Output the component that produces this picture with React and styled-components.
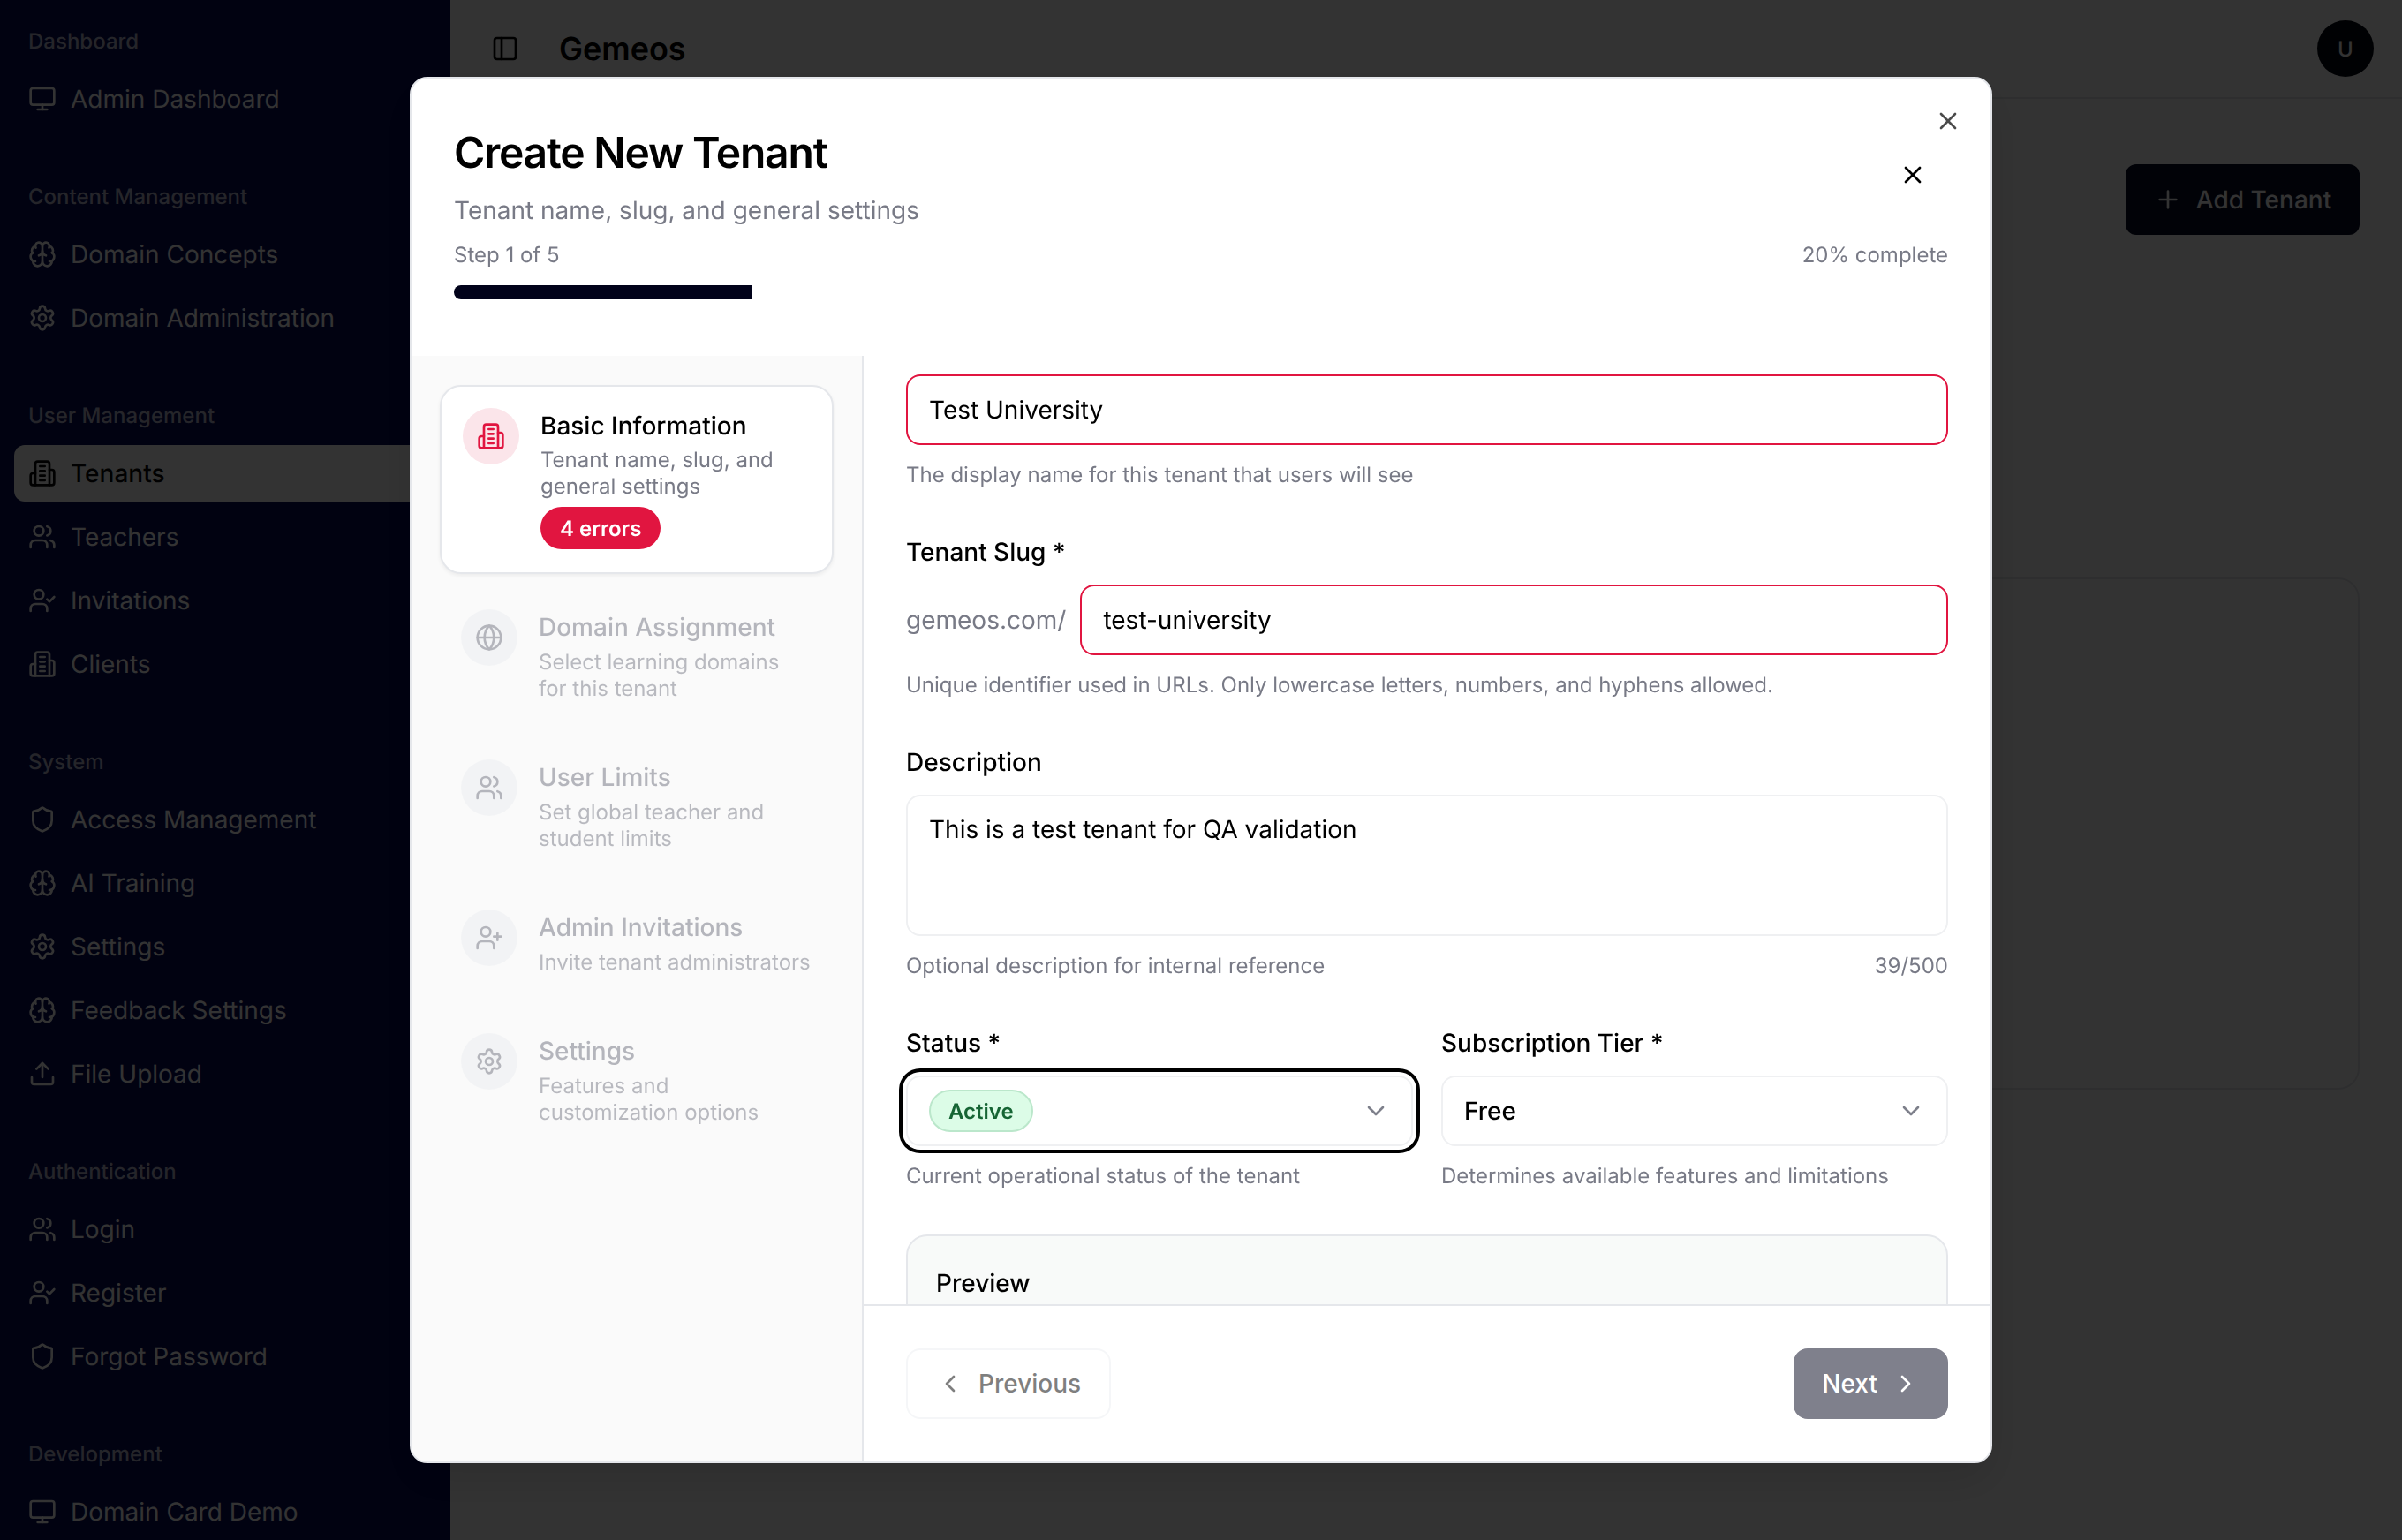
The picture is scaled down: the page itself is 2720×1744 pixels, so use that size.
import React from 'react';
import styled, { createGlobalStyle } from 'styled-components';
import { Monitor, Brain, Settings, Users, UserCheck, UserPlus, Shield, Upload, PanelLeft, Plus, X, Globe, ChevronDown, ChevronLeft, ChevronRight } from 'lucide-react';

const Global = createGlobalStyle`
  * { box-sizing: border-box; }
  html, body { margin: 0; padding: 0; height: 100%; overflow: hidden; background: #fff; }
  body { font-family: Inter, "Liberation Sans", sans-serif; color: #000; text-rendering: geometricPrecision; }
`;

const Page = styled.div`
  display: flex;
  width: 2720px;
  height: 1744px;
  overflow: hidden;
  background: #fff;
`;

const Side = styled.aside`
  width: 510px;
  flex: none;
  height: 1744px;
  overflow: hidden;
  background: #050a55;
  color: #fff;
  display: flex;
  flex-direction: column;
  gap: 16px;
`;

const Group = styled.section`
  padding: 16px;
  display: flex;
  flex-direction: column;
`;

const GroupLabel = styled.div`
  height: 64px;
  display: flex;
  align-items: center;
  padding: 0 16px 3px;
  font-size: 24px;
  font-weight: 500;
  color: rgba(255, 255, 255, 0.72);
`;

const Menu = styled.div`
  display: flex;
  flex-direction: column;
  gap: 8px;
`;

const Item = styled.div`
  height: 64px;
  display: flex;
  align-items: center;
  gap: 16px;
  padding: 0 16px;
  border-radius: 12px;
  font-size: 28px;
  font-weight: ${p => (p.$active ? 500 : 400)};
  background: ${p => (p.$active ? '#fff' : 'transparent')};
  color: ${p => (p.$active ? '#050505' : '#fff')};
  svg { width: 32px; height: 32px; flex: none; }
`;

const Main = styled.main`
  flex: 1;
  min-width: 0;
  display: flex;
  flex-direction: column;
`;

const TopBar = styled.header`
  height: 112px;
  flex: none;
  display: flex;
  align-items: center;
  gap: 45px;
  padding: 0 32px 0 46px;
  border-bottom: 2px solid #e5e7eb;
  svg { width: 32px; height: 32px; color: #000; }
`;

const Brand = styled.div`
  flex: 1;
  font-size: 36px;
  font-weight: 600;
  color: #000;
`;

const Avatar = styled.div`
  width: 64px;
  height: 64px;
  border-radius: 50%;
  background: #03060f;
  color: #fff;
  font-size: 24px;
  font-weight: 500;
  display: flex;
  align-items: center;
  justify-content: center;
`;

const Content = styled.div`
  flex: 1;
  padding: 74px 48px 0;
  display: flex;
  flex-direction: column;
  align-items: flex-end;
`;

const AddButton = styled.div`
  height: 80px;
  width: 265px;
  border-radius: 12px;
  background: #050a23;
  color: #fff;
  font-size: 28px;
  font-weight: 500;
  display: flex;
  align-items: center;
  justify-content: center;
  gap: 16px;
  svg { width: 32px; height: 32px; }
`;

const BackCard = styled.div`
  align-self: stretch;
  height: 580px;
  margin-top: 388px;
  border: 2px solid #e5e7eb;
  border-radius: 24px;
  background: #fff;
`;

const Overlay = styled.div`
  position: fixed;
  inset: 0;
  background: rgba(0, 0, 0, 0.8);
  display: flex;
  align-items: center;
  justify-content: center;
`;

const Dialog = styled.div`
  position: relative;
  width: 1792px;
  height: 1570px;
  background: #fff;
  border: 2px solid #e5e7eb;
  border-radius: 20px;
  box-shadow: 0 20px 50px rgba(0, 0, 0, 0.12);
  display: flex;
  flex-direction: column;
  overflow: hidden;
`;

const CornerClose = styled.button`
  position: absolute;
  top: 32px;
  right: 32px;
  width: 32px;
  height: 32px;
  padding: 0;
  border: 0;
  background: none;
  color: #000;
  opacity: 0.7;
  svg { width: 32px; height: 32px; display: block; }
`;

const DialogHeader = styled.div`
  flex: none;
  height: 314px;
  padding: 48px 48px 0;
`;

const TitleRow = styled.div`
  display: flex;
  align-items: center;
  justify-content: space-between;
`;

const Title = styled.h2`
  margin: 0;
  font-size: 48px;
  line-height: 72px;
  font-weight: 600;
  letter-spacing: -1.2px;
  color: #000;
`;

const Subtitle = styled.p`
  margin: 8px 0 0;
  font-size: 28px;
  line-height: 42px;
  color: #787a86;
`;

const IconButton = styled.button`
  width: 80px;
  height: 80px;
  padding: 0;
  border: 0;
  background: none;
  color: #000;
  display: flex;
  align-items: center;
  justify-content: center;
  svg { width: 32px; height: 32px; }
`;

const ProgressMeta = styled.div`
  margin-top: 14px;
  display: flex;
  justify-content: space-between;
  font-size: 24px;
  line-height: 32px;
  color: #787a86;
`;

const Track = styled.div`
  margin-top: 18px;
  height: 16px;
  border-radius: 999px;
  overflow: hidden;
  background: #fff;
`;

const Fill = styled.div`
  height: 100%;
  background: #01021a;
`;

const Body = styled.div`
  flex: 1;
  min-height: 0;
  display: flex;
`;

const Steps = styled.nav`
  width: 512px;
  flex: none;
  background: #fafafa;
  border-right: 2px solid #e5e7eb;
  padding: 33px 32px 32px;
  display: flex;
  flex-direction: column;
  gap: 16px;
`;

const Step = styled.div`
  display: flex;
  gap: 24px;
  padding: 24px 24px ${p => (p.$active ? 26 : 25)}px;
  border-radius: 24px;
  ${p => (p.$active
    ? 'background: #fff; border: 2px solid #e5e7eb; box-shadow: 0 2px 4px rgba(0,0,0,.06);'
    : 'opacity: 0.5;')}
`;

const StepIcon = styled.div`
  width: 64px;
  height: 64px;
  flex: none;
  border-radius: 50%;
  display: flex;
  align-items: center;
  justify-content: center;
  background: ${p => (p.$active ? '#fbe5ea' : '#eceef1')};
  color: ${p => (p.$active ? '#e11540' : '#71737f')};
  svg { width: 32px; height: 32px; }
`;

const StepText = styled.div`
  min-width: 0;
  margin-top: -1px;
  display: flex;
  flex-direction: column;
  align-items: flex-start;
`;

const StepTitle = styled.div`
  font-size: 28px;
  line-height: 42px;
  font-weight: 500;
  color: ${p => (p.$active ? '#000' : '#71737f')};
`;

const StepDesc = styled.div`
  margin-top: ${p => (p.$active ? 3 : 4)}px;
  font-size: 24px;
  line-height: 30px;
  color: #787a86;
`;

const Badge = styled.span`
  margin-top: 8px;
  height: 48px;
  padding: 0 22px;
  border-radius: 999px;
  background: #e11540;
  color: #fff;
  font-size: 24px;
  font-weight: 600;
  display: inline-flex;
  align-items: center;
`;

const FormPane = styled.div`
  flex: 1;
  min-width: 0;
  display: flex;
  flex-direction: column;
`;

const Scroll = styled.div`
  flex: 1;
  min-height: 0;
  overflow: hidden;
  padding: 21px 48px 0;
  display: flex;
  flex-direction: column;
`;

const Label = styled.div`
  font-size: 28px;
  line-height: 42px;
  font-weight: 500;
  color: #000;
  margin-top: ${p => p.$top || 0}px;
  margin-bottom: 16px;
`;

const Field = styled.div`
  height: 80px;
  flex: ${p => (p.$grow ? 1 : 'none')};
  border: 2px solid ${p => (p.$error ? '#e11540' : '#eff0f2')};
  border-radius: 16px;
  padding: 0 24px;
  background: #fff;
  display: flex;
  align-items: center;
  justify-content: space-between;
  font-size: 28px;
  color: #000;
  svg { width: 32px; height: 32px; color: #71737f; opacity: 0.9; }
`;

const SelectField = styled(Field)`
  font-weight: 500;
  ${p => p.$focused && 'box-shadow: 0 0 0 4px #fff, 0 0 0 8px #000;'}
`;

const TextArea = styled.div`
  flex: none;
  height: 160px;
  border: 2px solid #eff0f2;
  border-radius: 16px;
  padding: 16px 24px;
  font-size: 28px;
  line-height: 42px;
  color: #000;
`;

const Help = styled.div`
  margin-top: 16px;
  font-size: 24px;
  line-height: 36px;
  color: #787a86;
`;

const HelpRow = styled(Help)`
  display: flex;
  justify-content: space-between;
`;

const SlugRow = styled.div`
  display: flex;
  align-items: center;
  gap: 16px;
  flex: none;
`;

const Prefix = styled.span`
  font-size: 28px;
  color: #787a86;
`;

const Columns = styled.div`
  display: grid;
  grid-template-columns: 1fr 1fr;
  gap: 32px;
  margin-top: 48px;
  flex: none;
`;

const StatusPill = styled.span`
  height: 48px;
  padding: 0 20px;
  border-radius: 999px;
  background: #dcfce7;
  border: 2px solid #bbe7cb;
  color: #166534;
  font-size: 24px;
  font-weight: 600;
  display: inline-flex;
  align-items: center;
`;

const Preview = styled.div`
  flex: none;
  height: 400px;
  margin-top: 48px;
  padding: 32px;
  border: 2px solid #e5e7eb;
  border-radius: 24px;
  background: #f8faf9;
  font-size: 28px;
  line-height: 42px;
  font-weight: 500;
`;

const Footer = styled.div`
  flex: none;
  height: 178px;
  padding: 48px 48px 0;
  border-top: 2px solid #e5e7eb;
  background: #fff;
  display: flex;
  justify-content: space-between;
  align-items: flex-start;
`;

const NavButton = styled.button`
  height: 80px;
  padding: 0 32px;
  border-radius: 16px;
  border: ${p => (p.$primary ? '0' : '2px solid #eceef1')};
  background: ${p => (p.$primary ? '#01021a' : '#fff')};
  color: ${p => (p.$primary ? '#fff' : '#000')};
  opacity: 0.5;
  font-family: inherit;
  font-size: 28px;
  font-weight: 500;
  display: flex;
  align-items: center;
  gap: 16px;
  svg { width: 32px; height: 32px; }
`;

function TowerIcon() {
  return (
    <svg viewBox="0 0 24 24" fill="none" stroke="currentColor" strokeWidth="2" strokeLinecap="round" strokeLinejoin="round">
      <path d="M6 22V4a2 2 0 0 1 2-2h8a2 2 0 0 1 2 2v18Z" />
      <path d="M6 12H4a2 2 0 0 0-2 2v6a2 2 0 0 0 2 2h2" />
      <path d="M18 9h2a2 2 0 0 1 2 2v9a2 2 0 0 1-2 2h-2" />
      <path d="M10 6h4" />
      <path d="M10 10h4" />
      <path d="M10 14h4" />
      <path d="M10 18h4" />
    </svg>
  );
}

const groups = [
  ['Dashboard', [[Monitor, 'Admin Dashboard']]],
  ['Content Management', [[Brain, 'Domain Concepts'], [Settings, 'Domain Administration']]],
  ['User Management', [[TowerIcon, 'Tenants', true], [Users, 'Teachers'], [UserCheck, 'Invitations'], [TowerIcon, 'Clients']]],
  ['System', [[Shield, 'Access Management'], [Brain, 'AI Training'], [Settings, 'Settings'], [Brain, 'Feedback Settings'], [Upload, 'File Upload']]],
  ['Authentication', [[Users, 'Login'], [UserCheck, 'Register'], [Shield, 'Forgot Password']]],
  ['Development', [[Monitor, 'Domain Card Demo']]],
];

const steps = [
  [TowerIcon, 'Basic Information', ['Tenant name, slug, and', 'general settings'], true],
  [Globe, 'Domain Assignment', ['Select learning domains', 'for this tenant']],
  [Users, 'User Limits', ['Set global teacher and', 'student limits']],
  [UserPlus, 'Admin Invitations', ['Invite tenant administrators']],
  [Settings, 'Settings', ['Features and', 'customization options']],
];

export default function App() {
  return (
    <>
      <Global />
      <Page>
        <Side>
          {groups.map(([name, items]) => (
            <Group key={name}>
              <GroupLabel>{name}</GroupLabel>
              <Menu>
                {items.map(([Icon, label, active]) => (
                  <Item key={label} $active={active}>
                    <Icon />
                    {label}
                  </Item>
                ))}
              </Menu>
            </Group>
          ))}
        </Side>
        <Main>
          <TopBar>
            <PanelLeft />
            <Brand>Gemeos</Brand>
            <Avatar>U</Avatar>
          </TopBar>
          <Content>
            <AddButton><Plus />Add Tenant</AddButton>
            <BackCard />
          </Content>
        </Main>
      </Page>
      <Overlay>
        <Dialog>
          <CornerClose><X /></CornerClose>
          <DialogHeader>
            <TitleRow>
              <div>
                <Title>Create New Tenant</Title>
                <Subtitle>Tenant name, slug, and general settings</Subtitle>
              </div>
              <IconButton><X /></IconButton>
            </TitleRow>
            <ProgressMeta>
              <span>Step 1 of 5</span>
              <span>20% complete</span>
            </ProgressMeta>
            <Track><Fill style={{ width: '20%' }} /></Track>
          </DialogHeader>
          <Body>
            <Steps>
              {steps.map(([Icon, title, desc, active]) => (
                <Step key={title} $active={active}>
                  <StepIcon $active={active}><Icon /></StepIcon>
                  <StepText>
                    <StepTitle $active={active}>{title}</StepTitle>
                    <StepDesc $active={active}>{desc.map(line => <div key={line}>{line}</div>)}</StepDesc>
                    {active && <Badge>4 errors</Badge>}
                  </StepText>
                </Step>
              ))}
            </Steps>
            <FormPane>
              <Scroll>
                <Field $error>Test University</Field>
                <Help>The display name for this tenant that users will see</Help>
                <Label $top={48}>Tenant Slug *</Label>
                <SlugRow>
                  <Prefix>gemeos.com/</Prefix>
                  <Field $error $grow>test-university</Field>
                </SlugRow>
                <Help>Unique identifier used in URLs. Only lowercase letters, numbers, and hyphens allowed.</Help>
                <Label $top={48}>Description</Label>
                <TextArea>This is a test tenant for QA validation</TextArea>
                <HelpRow>
                  <span>Optional description for internal reference</span>
                  <span>39/500</span>
                </HelpRow>
                <Columns>
                  <div>
                    <Label>Status *</Label>
                    <SelectField $focused>
                      <StatusPill>Active</StatusPill>
                      <ChevronDown />
                    </SelectField>
                    <Help>Current operational status of the tenant</Help>
                  </div>
                  <div>
                    <Label>Subscription Tier *</Label>
                    <SelectField>
                      Free
                      <ChevronDown />
                    </SelectField>
                    <Help>Determines available features and limitations</Help>
                  </div>
                </Columns>
                <Preview>Preview</Preview>
              </Scroll>
              <Footer>
                <NavButton><ChevronLeft />Previous</NavButton>
                <NavButton $primary>Next<ChevronRight /></NavButton>
              </Footer>
            </FormPane>
          </Body>
        </Dialog>
      </Overlay>
    </>
  );
}
